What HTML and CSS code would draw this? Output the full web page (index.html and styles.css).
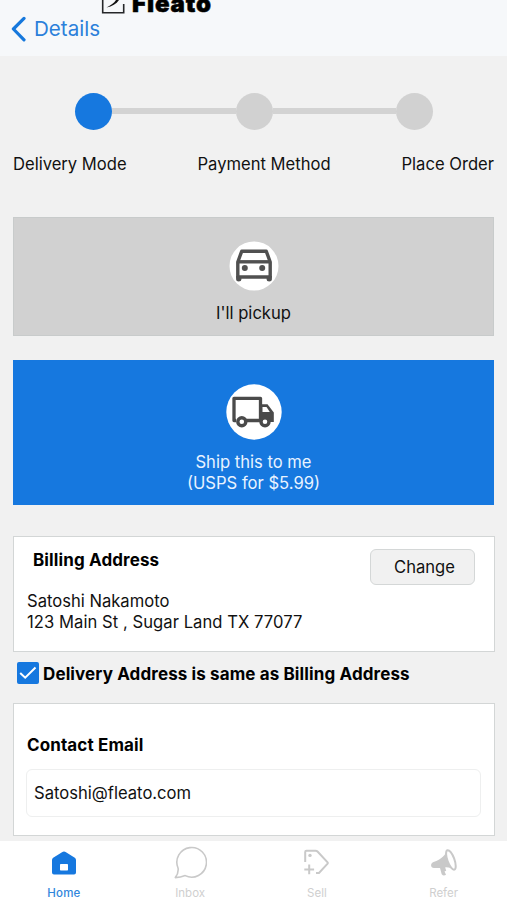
FILE: index.html
```html
<!DOCTYPE html>
<html lang="en">
<head>
<meta charset="utf-8">
<title>Fleato checkout</title>
<link rel="stylesheet" href="styles.css">
</head>
<body>
<div class="app">
  <header class="header">
    <div class="brand">
      <svg class="brand-mark" width="24" height="15" viewBox="0 0 24 15" fill="none"><path d="M1.7 0V12.7H22.7V4" stroke="#252729" stroke-width="1.6"/><path d="M15 0C13 3 10 5.5 5.5 7.4C11 6.5 15.5 4 18 0z" fill="#111"/></svg>
      <span class="brand-name">Fleato</span>
    </div>
    <a class="back">
      <svg width="16" height="26" viewBox="0 0 16 26" fill="none"><path d="M14 2.4L3.4 13L14 23.8" stroke="#1678dc" stroke-width="3.2" stroke-linecap="round" stroke-linejoin="round"/></svg>
      <span>Details</span>
    </a>
  </header>
  <main class="content">
    <div class="track">
      <i class="dot active"></i><i class="line"></i><i class="dot"></i><i class="line"></i><i class="dot"></i>
    </div>
    <div class="labels"><span>Delivery Mode</span><span>Payment Method</span><span>Place Order</span></div>
    <section class="option pickup">
      <svg width="50" height="50" viewBox="0 0 50 50"><circle cx="25" cy="25" r="24.5" fill="#fff"/><g fill="none" stroke="#505050" stroke-width="3.4" stroke-linejoin="round"><path d="M12.7 10.3H37.3L41.2 21V36H8.8V21Z"/><path d="M9 20.8H41"/></g><path d="M7.1 35H12.4V38.5Q12.4 40.5 9.7 40.5Q7.1 40.5 7.1 38.5ZM37.6 35H42.9V38.5Q42.9 40.5 40.2 40.5Q37.6 40.5 37.6 38.5Z" fill="#505050"/><circle cx="15.8" cy="27" r="3" fill="#505050"/><circle cx="33.2" cy="27" r="3" fill="#505050"/></svg>
      <span class="pickup-text">I'll pickup</span>
    </section>
    <section class="option ship">
      <svg width="56" height="56" viewBox="0 0 56 56"><circle cx="28" cy="28" r="27.7" fill="#fff"/><path d="M10 36.5H8V14.3H34.5V36.5H19" fill="none" stroke="#4a4a4a" stroke-width="3.3" stroke-linejoin="round"/><path d="M34 20.2H41.5L47.8 28.5V38H43L35 36Z" fill="#4a4a4a"/><path d="M36.5 23H40.5L43.8 28H36.5Z" fill="#fff"/><g fill="#fff" stroke="#4a4a4a" stroke-width="3.4"><circle cx="15.8" cy="37.7" r="4"/><circle cx="39" cy="37.7" r="4"/></g></svg>
      <span class="ship-text">Ship this to me</span>
      <span class="ship-price">(USPS for $5.99)</span>
    </section>
    <section class="card billing">
      <div class="billing-head"><h2>Billing Address</h2><button class="change">Change</button></div>
      <p class="name">Satoshi Nakamoto</p>
      <p class="street">123 Main St , Sugar Land TX 77077</p>
    </section>
    <div class="same">
      <svg width="22" height="22" viewBox="0 0 22 22" fill="none"><rect width="22" height="22" rx="2" fill="#1678df"/><path d="M3.2 11L8.2 15.7L18.5 5.5" stroke="#fff" stroke-width="2"/></svg>
      <span>Delivery Address is same as Billing Address</span>
    </div>
    <section class="card contact">
      <h2>Contact Email</h2>
      <div class="field"><span>Satoshi@fleato.com</span></div>
    </section>
  </main>
  <nav class="tabs">
    <a class="tab selected">
      <svg width="34" height="34" viewBox="0 0 34 34"><path d="M17 5.5Q18 5.5 19 6.2L27.8 11.7Q29 12.5 29 14V26.5Q29 28.5 27 28.5H7Q5 28.5 5 26.5V14Q5 12.5 6.2 11.7L15 6.2Q16 5.5 17 5.5Z" fill="#1678df"/><rect x="13" y="18" width="8" height="6.5" rx=".7" fill="#fff"/></svg>
      <span>Home</span>
    </a>
    <a class="tab">
      <svg width="34" height="34" viewBox="0 0 34 34" fill="none"><path d="M5.1 22.2A14.8 14.8 0 1 1 12.2 29.6Q7.5 31.5 2.3 31.6Q5.7 27 5.1 22.2Z" stroke="#c9c9c9" stroke-width="1.6" stroke-linejoin="round"/></svg>
      <span>Inbox</span>
    </a>
    <a class="tab">
      <svg width="34" height="34" viewBox="0 0 34 34" fill="none"><path d="M5.2 16V6Q5.2 4.7 6.5 4.7H15.5Q16.7 4.7 17.5 5.5L27.6 16.3Q28.2 17 27.6 17.7L19 27H16M4.3 23.4H14.1M9.2 18.6V28.3" stroke="#c9c9c9" stroke-width="2"/><circle cx="10" cy="9.4" r="1.7" fill="#c9c9c9"/></svg>
      <span>Sell</span>
    </a>
    <a class="tab">
      <svg width="34" height="34" viewBox="0 0 34 34"><path d="M19.5 4.2C19 9 14.5 13 6.5 16.1Q3.5 17.5 4.2 20.3Q4.8 22.5 7.8 22L13 22L14.7 28.3Q16.5 30.5 19 28.8L17.5 25.5L19.2 24.8L18.2 21.4C22 21.2 24.7 22.2 27.6 24Z" fill="#c9c9c9"/><ellipse cx="23.9" cy="13.9" rx="3.5" ry="10.3" transform="rotate(-20 23.9 13.9)" fill="#fff" stroke="#c9c9c9" stroke-width="2"/></svg>
      <span>Refer</span>
    </a>
  </nav>
</div>
</body>
</html>
```
FILE: styles.css
```css
* { box-sizing: border-box; }
body { margin: 0; background: #f1f1f1; color: #111; font: 16.6px/21px Inter, "Liberation Sans", sans-serif; }
h2, p { margin: 0; }
h2 { font-size: 17px; line-height: 21px; font-weight: 650; letter-spacing: .12px; color: #000; }
span, p, h2 { white-space: nowrap; }
.app { width: 507px; height: 900px; display: flex; flex-direction: column; overflow: hidden; }
.header { height: 56px; flex: none; background: #f6f8fa; }
.brand { height: 15px; margin-left: 101px; display: flex; align-items: flex-end; overflow: hidden; }
.brand-mark { flex: none; }
.brand-name { margin-left: 7px; font-size: 24px; line-height: 22px; font-weight: 900; letter-spacing: .9px; color: #000; -webkit-text-stroke: .5px #000; }
.back { display: flex; align-items: center; height: 27px; margin-left: 10px; color: #2b80da; font-size: 20.6px; gap: 8px; }
.content { flex: 1; min-height: 0; padding: 36px 13px 0; }
.track { display: flex; align-items: center; width: 358px; margin-left: 62px; height: 38px; }
.dot { flex: none; width: 37px; height: 37px; border-radius: 50%; background: #d1d1d1; }
.dot.active { background: #1678df; }
.line { flex: 1; height: 6px; background: #d3d3d3; }
.labels { display: flex; justify-content: space-between; margin-top: 24px; width: 481px; }
.option { display: flex; flex-direction: column; align-items: center; }
.option svg { flex: none; }
.pickup { height: 119px; margin-top: 42px; padding-top: 23px; background: #d1d1d1; border: 1px solid #c8cbcb; }
.pickup-text { margin-top: 12px; }
.ship { height: 145px; margin-top: 24px; padding-top: 24px; background: #1678df; color: #e8f3ff; }
.ship-text { margin-top: 12px; }
.card { background: #fff; border: 1px solid #d3d6d6; width: 482px; }
.billing { height: 116px; margin-top: 31px; padding: 12px 19px 0 13px; }
.billing-head { display: flex; justify-content: space-between; height: 42px; padding-left: 6px; }
.billing-head h2 { padding-top: 1px; }
.change { width: 105px; height: 36px; border: 1px solid #d4d7d7; border-radius: 6px; background: #f1f1f1; color: #111; font: inherit; padding: 0 0 0 4px; }
.street { letter-spacing: .05px; }
.same { display: flex; align-items: center; gap: 4px; height: 22px; margin: 10px 0 0 4px; font-size: 17px; font-weight: 650; letter-spacing: .12px; color: #000; }
.same svg { flex: none; }
.same span { padding-top: 2px; }
.contact { height: 133px; margin-top: 19px; padding: 31px 13px 0 12px; }
.contact h2 { padding-left: 1px; }
.field { height: 48px; margin-top: 13px; border: 1px solid #eeefef; border-radius: 6px; padding: 0 7px; display: flex; align-items: center; }
.tabs { height: 59px; flex: none; display: grid; grid-template-columns: repeat(4, 1fr); background: #fff; }
.tab { display: flex; flex-direction: column; align-items: center; padding-top: 5px; color: #cfcfcf; font-size: 11.5px; line-height: 14px; }
.tab span { margin-top: 6px; }
.tab.selected { color: #3186dc; font-weight: 500; padding-left: 1px; letter-spacing: .2px; }
```
